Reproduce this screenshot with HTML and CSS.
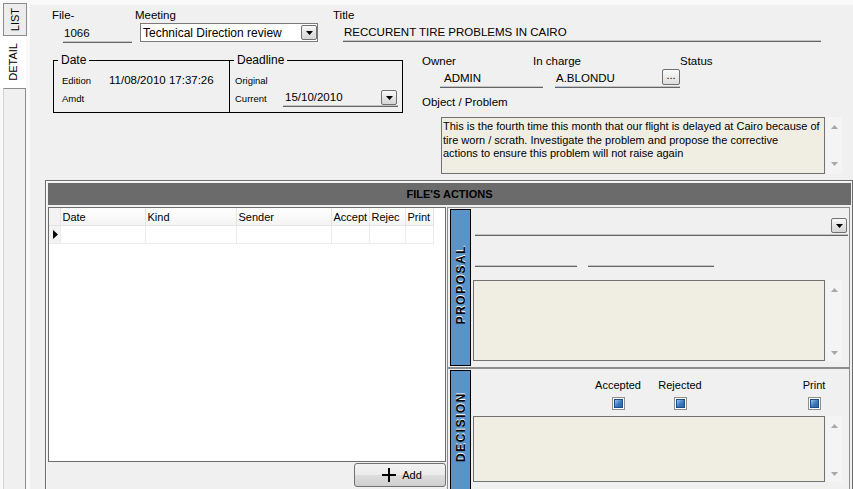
FILE: index.html
```html
<!DOCTYPE html>
<html>
<head>
<meta charset="utf-8">
<title>File detail</title>
<link rel="stylesheet" href="styles.css">
</head>
<body>
<div class="tabs">
    <div class="tab"><span>LIST</span></div>
    <div class="tab current"><span>DETAIL</span></div>
    <div class="tabRest"></div>
</div>
<div class="main">
    <div class="head">
        <div class="row1">
            <div class="colFile">
                <div class="lbl">File-</div>
                <div class="field fileNo">1066</div>
            </div>
            <div class="colMeeting">
                <div class="lbl">Meeting</div>
                <div class="combo">
                    <span>Technical Direction review</span>
                    <span class="dropBtn"><svg width="7" height="4"><polygon points="0,0 7,0 3.5,4"/></svg></span>
                </div>
            </div>
            <div class="colTitle">
                <div class="lbl">Title</div>
                <div class="field titleVal">RECCURENT TIRE PROBLEMS IN CAIRO</div>
            </div>
        </div>
        <div class="row2">
            <fieldset class="group dateGroup">
                <legend>Date</legend>
                <div class="line"><span class="small">Edition</span><span>11/08/2010 17:37:26</span></div>
                <div class="line"><span class="small">Amdt</span></div>
            </fieldset>
            <fieldset class="group deadGroup">
                <legend>Deadline</legend>
                <div class="line"><span class="small">Original</span></div>
                <div class="line">
                    <span class="small">Current</span>
                    <div class="field dateField">
                        <span>15/10/2010</span>
                        <span class="dropBtn"><svg width="7" height="4"><polygon points="0,0 7,0 3.5,4"/></svg></span>
                    </div>
                </div>
            </fieldset>
            <div class="people">
                <div class="peopleGrid">
                    <div class="lbl">Owner</div>
                    <div class="lbl">In charge</div>
                    <div class="lbl">Status</div>
                    <div class="field ownerVal">ADMIN</div>
                    <div class="field chargeVal"><span>A.BLONDU</span><span class="dotBtn">...</span></div>
                    <div></div>
                </div>
                <div class="lbl objLbl">Object / Problem</div>
                <div class="memoWrap">
                    <div class="memo objMemo">This is the fourth time this month that our flight is delayed at Cairo because of<br>tire worn / scrath. Investigate the problem and propose the corrective<br>actions to ensure this problem will not raise again</div>
                    <div class="vscroll">
                        <svg width="7" height="4"><polygon points="0,4 7,4 3.5,0"/></svg>
                        <svg width="7" height="4"><polygon points="0,0 7,0 3.5,4"/></svg>
                    </div>
                </div>
            </div>
        </div>
    </div>

    <div class="actions">
        <div class="actionsTitle">FILE'S ACTIONS</div>
        <div class="actionsBody">
            <div class="gridCol">
                <div class="grid">
                    <table>
                        <colgroup>
                            <col class="cInd"><col class="cDate"><col class="cKind"><col class="cSender">
                            <col class="cAccept"><col class="cRejec"><col class="cPrint">
                        </colgroup>
                        <tr>
                            <th class="ind"></th><th>Date</th><th>Kind</th><th>Sender</th>
                            <th>Accept</th><th>Rejec</th><th>Print</th>
                        </tr>
                        <tr>
                            <td class="ind"><svg width="5" height="9"><polygon points="0,0 5,4.5 0,9"/></svg></td>
                            <td></td><td></td><td></td><td></td><td></td><td></td>
                        </tr>
                    </table>
                </div>
                <button class="addBtn" type="button">
                    <svg width="14" height="14"><rect x="6" y="0" width="2" height="14"/><rect x="0" y="6" width="14" height="2"/></svg>
                    <span>Add</span>
                </button>
            </div>
            <div class="panels">
                <div class="panel proposal">
                    <div class="strip"><span>PROPOSAL</span></div>
                    <div class="pBody">
                        <div class="pCombo">
                            <span class="dropBtn"><svg width="7" height="4"><polygon points="0,0 7,0 3.5,4"/></svg></span>
                        </div>
                        <div class="pFields">
                            <div class="field shortA"></div>
                            <div class="field shortB"></div>
                        </div>
                        <div class="memoWrap pMemoWrap">
                            <div class="memo pMemo"></div>
                            <div class="vscroll pScroll">
                                <svg width="7" height="4"><polygon points="0,4 7,4 3.5,0"/></svg>
                                <svg width="7" height="4"><polygon points="0,0 7,0 3.5,4"/></svg>
                            </div>
                        </div>
                    </div>
                </div>
                <div class="panel decision">
                    <div class="strip"><span>DECISION</span></div>
                    <div class="pBody">
                        <div class="checks">
                            <div class="check chkAccepted"><span>Accepted</span><span class="chk"><i></i></span></div>
                            <div class="check chkRejected"><span>Rejected</span><span class="chk"><i></i></span></div>
                            <div class="check chkPrint"><span>Print</span><span class="chk"><i></i></span></div>
                        </div>
                        <div class="memoWrap dMemoWrap">
                            <div class="memo dMemo"></div>
                            <div class="vscroll dScroll">
                                <svg width="7" height="4"><polygon points="0,4 7,4 3.5,0"/></svg>
                                <svg width="7" height="4"><polygon points="0,0 7,0 3.5,4"/></svg>
                            </div>
                        </div>
                    </div>
                </div>
            </div>
        </div>
    </div>
</div>
</body>
</html>
```

FILE: styles.css
```css
body {margin: 0;
      width: 853px;
      height: 489px;
      overflow: hidden;
      display: flex;
      background: #f9f9f9;
      font-family: "Liberation Sans", Arial, sans-serif;
      font-size: 11.5px;
      color: #000}

/* left side tabs */
.tabs {width: 27px;
       flex-shrink: 0;
       display: flex;
       flex-direction: column}
.tab {box-sizing: border-box;
      width: 24px;
      height: 33px;
      margin: 3px 0 0 3px;
      border: 1px solid #8c8c8c;
      background: #ececec;
      display: flex;
      align-items: center;
      justify-content: center}
.tab span {writing-mode: vertical-rl;
           transform: rotate(180deg);
           font-size: 11px}
.tab.current {width: 26px;
              height: 52px;
              margin: 0;
              border: none;
              background: #fff}
.tabRest {flex: 1;
          width: 23px;
          box-sizing: border-box;
          margin-left: 3px;
          border-top: 1px solid #8c8c8c;
          border-right: 1px solid #8c8c8c;
          border-left: 1px solid #d4d4d4;
          background: #f0f0f0}

.main {flex: 1;
       min-width: 0;
       margin: 5px 0 0 3px;
       background: #f0f0f0;
       display: flex;
       flex-direction: column}

/* header fields */
.head {height: 175px; flex-shrink: 0}
.lbl {height: 13px; line-height: 13px; white-space: nowrap}
.field {box-sizing: border-box;
        height: 19px;
        line-height: 19px;
        margin-top: 2px;
        border-bottom: 1px solid #646464;
        box-shadow: inset 0 -1px 0 #c4c4c4;
        white-space: nowrap}
.row1 {display: flex; padding: 4px 0 0 22px}
.colFile {width: 83px}
.fileNo {margin-left: 11px; width: 69px; padding-left: 1px}
.colMeeting {width: 198px}
.combo {box-sizing: border-box;
        width: 178px;
        height: 19px;
        margin: 1px 0 0 5px;
        padding-left: 2px;
        border: 1px solid #7a7a7a;
        background: #fff;
        display: flex;
        align-items: center;
        justify-content: space-between}
.combo span:first-child {font-size: 12px}
.colTitle {flex: 1}
.titleVal {margin-top: 1px; margin-left: 10px; width: 478px; padding-left: 1px}

.dropBtn {box-sizing: border-box;
          width: 16px;
          height: 15px;
          border: 1px solid #707070;
          border-radius: 2px;
          background: linear-gradient(#fafafa, #e4e4e4 50%, #d6d6d6);
          display: flex;
          align-items: center;
          justify-content: center}

.row2 {display: flex; margin-top: 10px}
.group {box-sizing: border-box;
        height: 60px;
        margin: 0;
        padding: 5px 4px 0 4px;
        border: 1px solid #000;
        min-width: 0}
.group legend {padding: 0 3px; line-height: 14px; font-size: 12px}
.dateGroup {margin-left: 23px; width: 177px}
.deadGroup {margin-left: -1px; width: 174px}
.line {display: flex; align-items: center; height: 16px; padding-left: 4px}
.line + .line {margin-top: 2px}
.small {font-size: 9.5px; width: 47px; flex-shrink: 0}
.deadGroup .line {padding-left: 1px}
.deadGroup .small {width: 48px}
.dateField {width: 117px;
            height: 18px;
            margin-top: 0;
            padding-left: 2px;
            display: flex;
            align-items: center;
            justify-content: space-between}
.dateField .dropBtn {margin-right: 1px}

.people {margin: 2px 0 0 19px}
.peopleGrid {display: grid; grid-template-columns: 111px 147px 100px}
.peopleGrid .field {height: 18px; line-height: 17px}
.ownerVal {margin-left: 18px; width: 103px; padding-left: 4px}
.chargeVal {margin-left: 22px;
            width: 125px;
            padding-left: 1px;
            display: flex;
            justify-content: space-between}
.dotBtn {box-sizing: border-box;
         width: 18px;
         height: 16px;
         margin-top: -1px;
         border: 1px solid #707070;
         border-radius: 2px;
         background: linear-gradient(#fafafa, #dedede);
         font-size: 11px;
         line-height: 11px;
         text-align: center}
.objLbl {margin-top: 8px}
.memoWrap {display: flex}
.people .memoWrap {margin: 8px 0 0 19px}
.memo {box-sizing: border-box;
       border: 1px solid #727272;
       background: #f0eee3}
.objMemo {width: 384px;
          height: 57px;
          padding: 2px 1px 0 1px;
          font-size: 11px;
          line-height: 13.5px;
          white-space: nowrap;
          overflow: hidden}
.vscroll {box-sizing: border-box;
          width: 16px;
          margin-left: 1px;
          padding: 8px 0;
          background: #f4f4f4;
          display: flex;
          flex-direction: column;
          justify-content: space-between;
          align-items: center}
.vscroll svg {fill: #a8a8a8}

/* file's actions */
.actions {flex: 1;
          min-height: 0;
          margin-left: 15px;
          padding: 2px 1px 0 2px;
          border: 1px solid #6d6d6d;
          border-bottom: none;
          box-shadow: inset 1px 1px 0 #fafafa;
          display: flex;
          flex-direction: column}
.actionsTitle {height: 22px;
               line-height: 22px;
               background: #6b6b6b;
               text-align: center;
               font-size: 11px;
               font-weight: bold;
               color: #000}
.actionsBody {flex: 1; min-height: 0; display: flex; margin-top: 2px}

.gridCol {width: 398px;
          flex-shrink: 0;
          display: flex;
          flex-direction: column;
          align-items: flex-end}
.grid {box-sizing: border-box;
       width: 398px;
       height: 255px;
       border: 1px solid #6d6d6d;
       background: #fff}
.grid table {border-collapse: collapse; table-layout: fixed; width: 384px}
.cInd {width: 11px}
.cDate {width: 85px}
.cKind {width: 91px}
.cSender {width: 95px}
.cAccept {width: 38px}
.cRejec {width: 36px}
.cPrint {width: 28px}
.grid th {height: 17px;
          padding: 0 2px;
          background: linear-gradient(#ffffff, #f4f4f4);
          border-right: 1px solid #e4e4e4;
          border-bottom: 1px solid #e4e4e4;
          font-size: 11px;
          font-weight: normal;
          text-align: left;
          white-space: nowrap;
          overflow: hidden}
.grid td {height: 17px;
          padding: 0;
          border-right: 1px solid #ececec;
          border-bottom: 1px solid #ececec}
.grid .ind {background: #f3f3f3; padding-left: 4px}
.grid td.ind svg {display: block}

.addBtn {box-sizing: border-box;
         width: 92px;
         height: 24px;
         margin-top: 1px;
         border: 1px solid #707070;
         border-radius: 3px;
         background: linear-gradient(#f2f2f2, #ebebeb 50%, #dddddd 51%, #cfcfcf);
         display: flex;
         align-items: center;
         justify-content: center;
         gap: 6px;
         font-family: "Liberation Sans", Arial, sans-serif;
         font-size: 11px;
         color: #000;
         padding: 0 0 0 4px}

.panels {flex: 1;
         margin: 0 1px 0 1px;
         display: flex;
         flex-direction: column}
.panel {box-sizing: border-box;
        display: flex;
        padding: 1px 1px 1px 2px;
        border: 1px solid #8d8d8d}
.proposal {height: 161px}
.decision {flex: 1; border-bottom: none; padding-bottom: 0}
.strip {box-sizing: border-box;
        width: 21px;
        flex-shrink: 0;
        border: 1px solid #000;
        background: #5a93c6;
        display: flex;
        align-items: center;
        justify-content: center}
.decision .strip {border-bottom: none}
.strip span {writing-mode: vertical-rl;
             transform: rotate(180deg);
             font-size: 12px;
             font-weight: bold;
             letter-spacing: 1.5px;
             color: #000;
             text-shadow: 1px 0 0 #fff}
.proposal .strip span {margin-bottom: 6px}
.decision .strip span {margin-bottom: 6px}
.pBody {flex: 1; min-width: 0}
.pCombo {box-sizing: border-box;
         height: 19px;
         margin: 8px 0 0 4px;
         border-bottom: 1px solid #646464;
         box-shadow: inset 0 -1px 0 #c4c4c4;
         display: flex;
         justify-content: flex-end}
.pCombo .dropBtn {margin: 1px 1px 0 0}
.pFields {display: flex; gap: 11px; margin: 11px 0 0 4px}
.pFields .field {height: 18px}
.shortA {width: 102px}
.shortB {width: 126px}
.pMemoWrap {margin: 13px 0 0 2px}
.pMemo {width: 352px; height: 81px}
.pScroll {padding: 8px 0 6px}

.checks {display: flex; margin: 9px 0 0 119px}
.check {display: flex; flex-direction: column; align-items: center; font-size: 11px}
.chkAccepted {width: 56px}
.chkRejected {width: 56px; margin-left: 6px}
.chkPrint {width: 42px; margin-left: 85px}
.check span:first-child {height: 12px; line-height: 12px}
.chk {box-sizing: border-box;
      width: 13px;
      height: 13px;
      margin-top: 6px;
      padding: 1px;
      border: 1px solid #8e8f8f;
      background: #fff}
.chk i {display: block;
        box-sizing: border-box;
        width: 9px;
        height: 9px;
        border: 1px solid #1d4f86;
        background: linear-gradient(135deg, #9cc4ea, #3a78bf 55%, #2a62a8)}
.dMemoWrap {margin: 6px 0 0 2px}
.dMemo {width: 352px; height: 66px}
.dScroll {padding: 8px 0 6px}
```
